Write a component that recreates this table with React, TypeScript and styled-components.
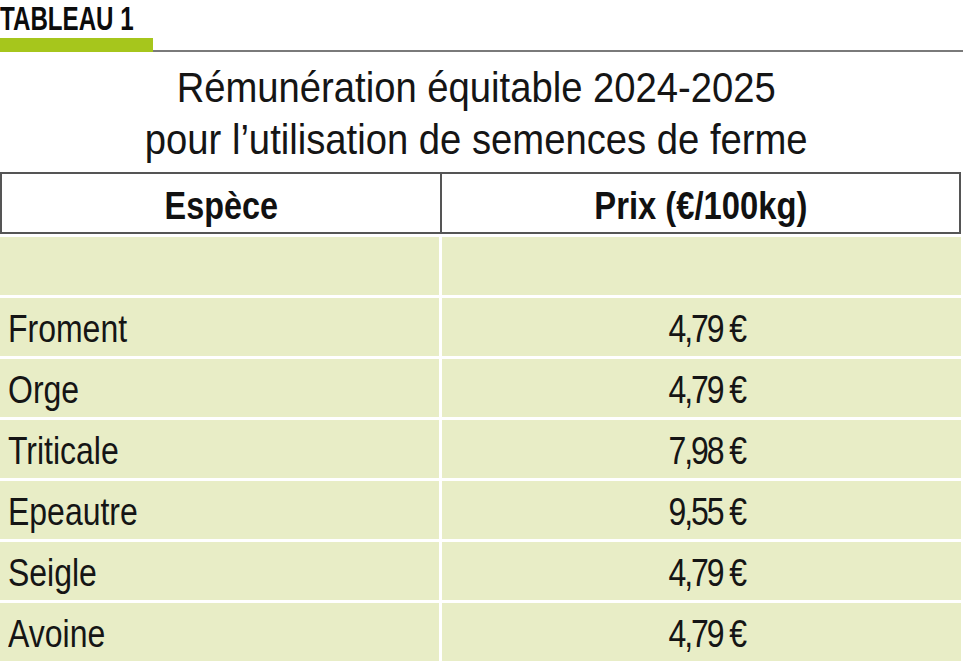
import React from "react";
import styled, {createGlobalStyle} from "styled-components";

const GlobalStyle = createGlobalStyle`
	html, body {
		margin: 0;
		padding: 0;
		background: #fff;
	}
	body {
		font-family: "Liberation Sans", Arial, sans-serif;
		color: #141414;
	}
`;

// condensed look: the narrow face is not installed, so squeeze the sans face
const Narrow = styled.span<{$scale?: number; $origin?: "left" | "center"}>`
	display: inline-block;
	white-space: nowrap;
	transform: scaleX(${p => p.$scale ?? 0.82});
	transform-origin: ${p => (p.$origin === "left" ? "left" : "center")} center;
`;

const Page = styled.div`
	width: 963px;
	display: flex;
	flex-direction: column;
`;

const Label = styled.div`
	padding-top: 2px;
	font-size: 34px;
	line-height: 32px;
	font-weight: bold;
	color: #0c0c0c;
`;

const Rule = styled.div`
	display: flex;
	align-items: flex-end;
	margin-top: 4px;
	height: 14px;
`;

const RuleAccent = styled.div`
	width: 153px;
	height: 14px;
	background: #a6c61c;
`;

const RuleLine = styled.div`
	flex: 1;
	height: 2px;
	background: #7a7a7a;
`;

const Title = styled.h1`
	margin: 10px 0 0;
	padding-right: 10px;
	display: flex;
	flex-direction: column;
	align-items: center;
	font-size: 42px;
	line-height: 52px;
	font-weight: normal;
	color: #151515;
`;

const Table = styled.div`
	margin-top: 6px;
	width: 961px;
	display: flex;
	flex-direction: column;
	gap: 3px;
`;

const HeadRow = styled.div`
	display: grid;
	grid-template-columns: 438px 1fr;
	height: 58px;
	border: 2px solid #555;
`;

const HeadCell = styled.div<{$divider?: boolean}>`
	display: flex;
	align-items: center;
	justify-content: center;
	padding-top: 6px;
	font-size: 39px;
	font-weight: bold;
	color: #111;
	border-left: ${p => (p.$divider ? "2px solid #555" : "none")};
`;

const BodyRow = styled.div`
	display: grid;
	grid-template-columns: 439px 1fr;
	column-gap: 3px;
	height: 58px;
`;

const Cell = styled.div<{$align?: "left" | "center"}>`
	display: flex;
	align-items: center;
	justify-content: ${p => (p.$align === "center" ? "center" : "flex-start")};
	padding: 4px ${p => (p.$align === "center" ? "0 0 10px" : "8px 0")};
	background: #e8edc6;
	font-size: 39px;
	color: #151515;
`;

const Price = styled(Narrow)`
	letter-spacing: -2.5px;
`;

const rows: [string, string][] = [
	["", ""],
	["Froment", "4,79 €"],
	["Orge", "4,79 €"],
	["Triticale", "7,98 €"],
	["Epeautre", "9,55 €"],
	["Seigle", "4,79 €"],
	["Avoine", "4,79 €"]
];

export default function App() {
	return (
		<Page>
			<GlobalStyle />
			<Label>
				<Narrow $scale={0.71} $origin="left">TABLEAU 1</Narrow>
			</Label>
			<Rule>
				<RuleAccent />
				<RuleLine />
			</Rule>
			<Title>
				<Narrow $scale={0.91}>Rémunération équitable 2024-2025</Narrow>
				<Narrow $scale={0.91}>pour l’utilisation de semences de ferme</Narrow>
			</Title>
			<Table>
				<HeadRow>
					<HeadCell>
						<Narrow $scale={0.83}>Espèce</Narrow>
					</HeadCell>
					<HeadCell $divider>
						<Narrow $scale={0.84}>Prix (€/100kg)</Narrow>
					</HeadCell>
				</HeadRow>
				{rows.map(([name, price], i) => (
					<BodyRow key={i}>
						<Cell>
							<Narrow $origin="left">{name}</Narrow>
						</Cell>
						<Cell $align="center">
							<Price>{price}</Price>
						</Cell>
					</BodyRow>
				))}
			</Table>
		</Page>
	);
}
